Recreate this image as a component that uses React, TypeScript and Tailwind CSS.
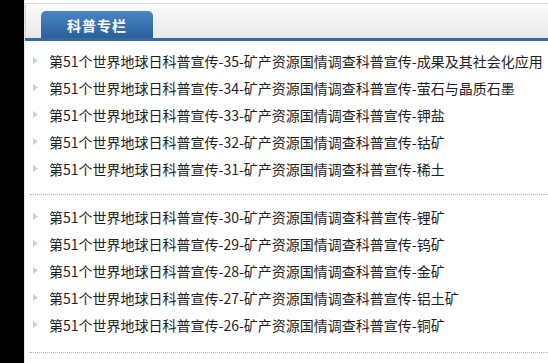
const groups: string[][] = [
  [
    '第51个世界地球日科普宣传-35-矿产资源国情调查科普宣传-成果及其社会化应用',
    '第51个世界地球日科普宣传-34-矿产资源国情调查科普宣传-萤石与晶质石墨',
    '第51个世界地球日科普宣传-33-矿产资源国情调查科普宣传-钾盐',
    '第51个世界地球日科普宣传-32-矿产资源国情调查科普宣传-钴矿',
    '第51个世界地球日科普宣传-31-矿产资源国情调查科普宣传-稀土',
  ],
  [
    '第51个世界地球日科普宣传-30-矿产资源国情调查科普宣传-锂矿',
    '第51个世界地球日科普宣传-29-矿产资源国情调查科普宣传-钨矿',
    '第51个世界地球日科普宣传-28-矿产资源国情调查科普宣传-金矿',
    '第51个世界地球日科普宣传-27-矿产资源国情调查科普宣传-铝土矿',
    '第51个世界地球日科普宣传-26-矿产资源国情调查科普宣传-铜矿',
  ],
];

function Bullet() {
  return (
    <svg width="5" height="7" viewBox="0 0 5 7" className="shrink-0">
      <path d="M0 0 L5 3.5 L0 7 Z" fill="#c2d2e2" />
    </svg>
  );
}

export default function App() {
  return (
    <div
      className="flex w-[548px] h-[363px] overflow-hidden bg-white"
      style={{ fontFamily: '"Noto Sans CJK SC", "Liberation Sans", sans-serif' }}
    >
      {/* left dark strip */}
      <div className="w-[24px] shrink-0 bg-black" />

      <div className="flex-1 min-w-0 border-l border-[#e4e4e4] pt-[3px]">
        {/* Header */}
        <div className="h-[35px] border-t border-l border-[#d6d6d6] bg-gradient-to-b from-[#fbfbfb] to-[#e9e9e9] flex items-end pl-[15px]">
          <div className="w-[112px] h-[27px] rounded-t-[5px] bg-gradient-to-b from-[#4a86c4] to-[#2b5f9c] flex items-center justify-center">
            <span className="text-white text-[14px] font-bold tracking-[1px] leading-none">科普专栏</span>
          </div>
        </div>
        <div className="h-[3px] bg-[#3a6a9a]" />

        {groups.map((items, gi) => (
          <div
            key={gi}
            className={`ml-[5px] border-b border-dotted border-[#b5b5b5] ${gi === 0 ? 'pt-[6px] pb-[12px]' : 'pt-[8px] pb-[14px]'}`}
          >
            {items.map((text) => (
              <div key={text} className="h-[27px] flex items-center gap-[11px] pl-[3px]">
                <Bullet />
                <span className="text-[14px] text-[#1e1e1e] whitespace-nowrap leading-none">{text}</span>
              </div>
            ))}
          </div>
        ))}
      </div>
    </div>
  );
}
